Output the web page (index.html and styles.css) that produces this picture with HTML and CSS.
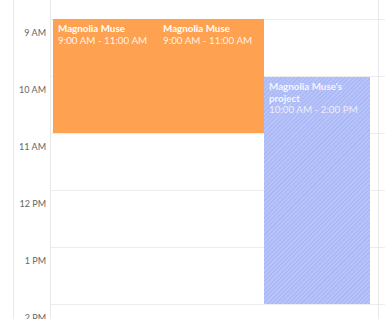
FILE: index.html
```html
<!DOCTYPE html>
<html>
<head>
<meta charset="utf-8">
<link rel="stylesheet" href="styles.css">
</head>
<body>
<div class="cal">
  <div class="edge"></div>
  <div class="gutter">
    <div class="slot"><span>9 AM</span></div>
    <div class="slot"><span>10 AM</span></div>
    <div class="slot"><span>11 AM</span></div>
    <div class="slot"><span>12 PM</span></div>
    <div class="slot"><span>1 PM</span></div>
    <div class="slot"><span>2 PM</span></div>
  </div>
  <div class="day">
    <div class="row"></div>
    <div class="row"></div>
    <div class="row"></div>
    <div class="row"></div>
    <div class="row"></div>
    <div class="row"></div>
    <div class="event orange ev-a">
      <div class="title">Magnolia Muse</div>
      <div class="time">9:00 AM - 11:00 AM</div>
    </div>
    <div class="event orange ev-b">
      <div class="title">Magnolia Muse</div>
      <div class="time">9:00 AM - 11:00 AM</div>
    </div>
    <div class="event blue ev-c">
      <div class="title">Magnolia Muse's project</div>
      <div class="time">10:00 AM - 2:00 PM</div>
    </div>
  </div>
  <div class="day next">
    <div class="row"></div>
    <div class="row"></div>
    <div class="row"></div>
    <div class="row"></div>
    <div class="row"></div>
    <div class="row"></div>
  </div>
</div>
</body>
</html>
```
FILE: styles.css
```css
html, body {
  margin: 0;
  padding: 0;
  background: #fff;
  font-family: "Lato", "Open Sans", sans-serif;
}
.cal {
  display: flex;
  height: 319px;
  overflow: hidden;
}
.edge {
  width: 13px;
  border-right: 1px solid #e9e9ec;
  flex: none;
}
.gutter {
  width: 36px;
  flex: none;
  border-right: 1px solid #e9e9ec;
  padding-top: 19px;
}
.slot {
  height: 57px;
  box-sizing: border-box;
  padding-top: 8px;
  padding-right: 4px;
  text-align: right;
  font-size: 9px;
  line-height: 11px;
  color: #666;
}
.day {
  width: 327px;
  flex: none;
  position: relative;
  border-right: 1px solid #e9e9ec;
  padding-top: 19px;
}
.day.next {
  flex: 1;
  border-right: none;
}
.row {
  height: 57px;
  box-sizing: border-box;
  border-top: 1px solid #ececef;
}
.event {
  position: absolute;
  box-sizing: border-box;
  padding: 4px 5px;
  font-size: 9.8px;
  line-height: 11.5px;
  color: #fff;
}
.title {
  font-weight: 700;
}
.orange {
  background: #fea150;
}
.orange .time {
  color: rgba(255, 255, 255, 0.9);
}
.ev-a {
  top: 19px;
  left: 2px;
  width: 106px;
  height: 114px;
}
.ev-b {
  top: 19px;
  left: 107px;
  width: 106px;
  height: 114px;
}
.blue {
  background: repeating-linear-gradient(-45deg, #acb9f7 0 1.5px, #b8c4f9 1.5px 3px);
  color: rgba(255, 255, 255, 0.88);
}
.blue .time {
  color: rgba(255, 255, 255, 0.75);
}
.ev-c {
  top: 77px;
  left: 213px;
  width: 106px;
  height: 227px;
}
```
